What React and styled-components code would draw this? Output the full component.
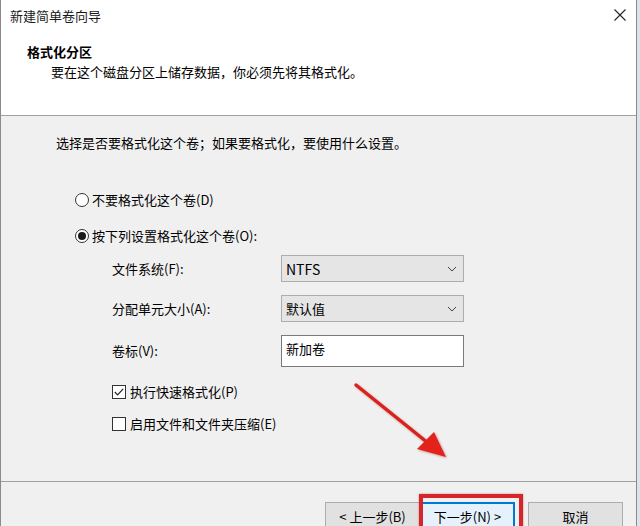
import React from "react";
import styled, { createGlobalStyle } from "styled-components";

const GlobalStyle = createGlobalStyle`
	html, body {
		margin: 0;
		padding: 0;
		width: 640px;
		height: 526px;
		overflow: hidden;
		background: #dde3ea;
	}
	* {
		box-sizing: border-box;
	}
`;

const Page = styled.div`
	position: relative;
	width: 640px;
	height: 526px;
	overflow: hidden;
	font-family: "Noto Sans CJK SC", "Noto Sans", sans-serif;
	font-size: 13px;
	color: #000;
`;

const Window = styled.div`
	width: 637px;
	height: 560px;
	border-left: 1px solid #8a8a8a;
	border-right: 1px solid #8a8a8a;
	display: flex;
	flex-direction: column;
	background: #f0f0f0;
`;

const TitleBar = styled.div`
	height: 30px;
	display: flex;
	align-items: center;
	justify-content: space-between;
	padding: 0 10px 0 9px;
	background: #fff;
	color: #1a1a1a;
`;

const Header = styled.div`
	height: 86px;
	background: #fff;
	border-bottom: 1px solid #a0a0a0;
	padding: 12px 0 0 26px;
	display: flex;
	flex-direction: column;
`;

const Heading = styled.div`
	font-weight: bold;
	line-height: 20px;
`;

const SubHeading = styled.div`
	padding-left: 24px;
	line-height: 19px;
`;

const Body = styled.div`
	height: 366px;
	border-bottom: 1px solid #a0a0a0;
	padding: 17px 0 0 55px;
	display: flex;
	flex-direction: column;
`;

const Intro = styled.div`
	line-height: 20px;
`;

const RadioGroup = styled.div`
	margin-top: 37px;
	padding-left: 19px;
	display: flex;
	flex-direction: column;
	gap: 16px;
`;

const Choice = styled.label`
	display: flex;
	align-items: center;
	gap: 3px;
	line-height: 20px;
`;

const RadioMark = styled.span`
	width: 14px;
	height: 14px;
	border-radius: 50%;
	border: 1px solid #333;
	background: #fff;
	display: flex;
	align-items: center;
	justify-content: center;
	&::after {
		content: "";
		width: 8px;
		height: 8px;
		border-radius: 50%;
		background: ${(p) => (p.checked ? "#1a1a1a" : "transparent")};
	}
`;

const Options = styled.div`
	margin-top: 9px;
	padding-left: 56px;
	display: grid;
	grid-template-columns: 169px 183px;
	row-gap: 13px;
	align-items: center;
`;

const FieldLabel = styled.div`
	line-height: 20px;
`;

const Select = styled.div`
	height: 27px;
	border: 1px solid #adadad;
	background: #e5e5e5;
	display: flex;
	align-items: center;
	justify-content: space-between;
	padding: 0 6px 0 4px;
	font-size: ${(p) => (p.latin ? "14px" : "13px")};
`;

const TextBox = styled.div`
	height: 32px;
	border: 1px solid #7a7a7a;
	background: #fff;
	padding: 3px 0 0 4px;
`;

const Checks = styled.div`
	margin-top: 15px;
	padding-left: 56px;
	display: flex;
	flex-direction: column;
	gap: 12px;
`;

const CheckMark = styled.span`
	width: 14px;
	height: 14px;
	border: 1px solid #333;
	background: #fff;
	display: flex;
	align-items: center;
	justify-content: center;
	margin-right: 1px;
`;

const Footer = styled.div`
	flex: 1;
	display: flex;
	justify-content: flex-end;
	align-items: flex-start;
	padding: 20px 13px 0 0;
`;

const Button = styled.div`
	width: 95px;
	height: 29px;
	display: flex;
	align-items: center;
	justify-content: center;
	background: ${(p) => (p.primary ? "#e5f1fb" : "#e1e1e1")};
	border: ${(p) => (p.primary ? "2px solid #0078d7" : "1px solid #adadad")};
	margin-left: ${(p) => p.gap || 0}px;
	position: relative;
`;

const Highlight = styled.div`
	position: absolute;
	left: -3px;
	top: -10px;
	width: 104px;
	height: 60px;
	border: 4px solid #d8252a;
	box-shadow: 0 0 2px rgba(120, 0, 0, 0.4);
`;

const Annotation = styled.svg`
	position: absolute;
	left: 0;
	top: 0;
	pointer-events: none;
`;

const Chevron = () => (
	<svg width="10" height="6" viewBox="0 0 10 6">
		<path d="M1 1 L5 5 L9 1" fill="none" stroke="#444" strokeWidth="1" />
	</svg>
);

const App = () => {
	return (
		<Page>
			<GlobalStyle />
			<Window>
				<TitleBar>
					<span>新建简单卷向导</span>
					<svg width="12" height="12" viewBox="0 0 12 12">
						<path d="M0.5 0.5 L11.5 11.5 M11.5 0.5 L0.5 11.5" stroke="#222" strokeWidth="1.1" />
					</svg>
				</TitleBar>
				<Header>
					<Heading>格式化分区</Heading>
					<SubHeading>要在这个磁盘分区上储存数据，你必须先将其格式化。</SubHeading>
				</Header>
				<Body>
					<Intro>选择是否要格式化这个卷；如果要格式化，要使用什么设置。</Intro>
					<RadioGroup>
						<Choice>
							<RadioMark />
							不要格式化这个卷(D)
						</Choice>
						<Choice>
							<RadioMark checked />
							按下列设置格式化这个卷(O):
						</Choice>
					</RadioGroup>
					<Options>
						<FieldLabel>文件系统(F):</FieldLabel>
						<Select latin>
							<span>NTFS</span>
							<Chevron />
						</Select>
						<FieldLabel>分配单元大小(A):</FieldLabel>
						<Select>
							<span>默认值</span>
							<Chevron />
						</Select>
						<FieldLabel>卷标(V):</FieldLabel>
						<TextBox>新加卷</TextBox>
					</Options>
					<Checks>
						<Choice>
							<CheckMark>
								<svg width="10" height="8" viewBox="0 0 10 8">
									<path d="M0.8 4 L3.6 6.8 L9.2 0.8" fill="none" stroke="#222" strokeWidth="1.2" />
								</svg>
							</CheckMark>
							执行快速格式化(P)
						</Choice>
						<Choice>
							<CheckMark />
							启用文件和文件夹压缩(E)
						</Choice>
					</Checks>
				</Body>
				<Footer>
					<Button>&lt; 上一步(B)</Button>
					<Button primary>
						下一步(N) &gt;
						<Highlight />
					</Button>
					<Button gap={13}>取消</Button>
				</Footer>
			</Window>
			<Annotation width="640" height="526" viewBox="0 0 640 526">
				<defs>
					<filter id="sh" x="-20%" y="-20%" width="140%" height="140%">
						<feDropShadow dx="1" dy="1" stdDeviation="1" floodColor="#7a0000" floodOpacity="0.35" />
					</filter>
				</defs>
				<g filter="url(#sh)">
					<line x1="356" y1="385" x2="428" y2="443" stroke="#d9231f" strokeWidth="3.5" strokeLinecap="round" />
					<polygon points="446,457 417,449 434,432" fill="#e3221d" />
				</g>
			</Annotation>
		</Page>
	);
};

export default App;
